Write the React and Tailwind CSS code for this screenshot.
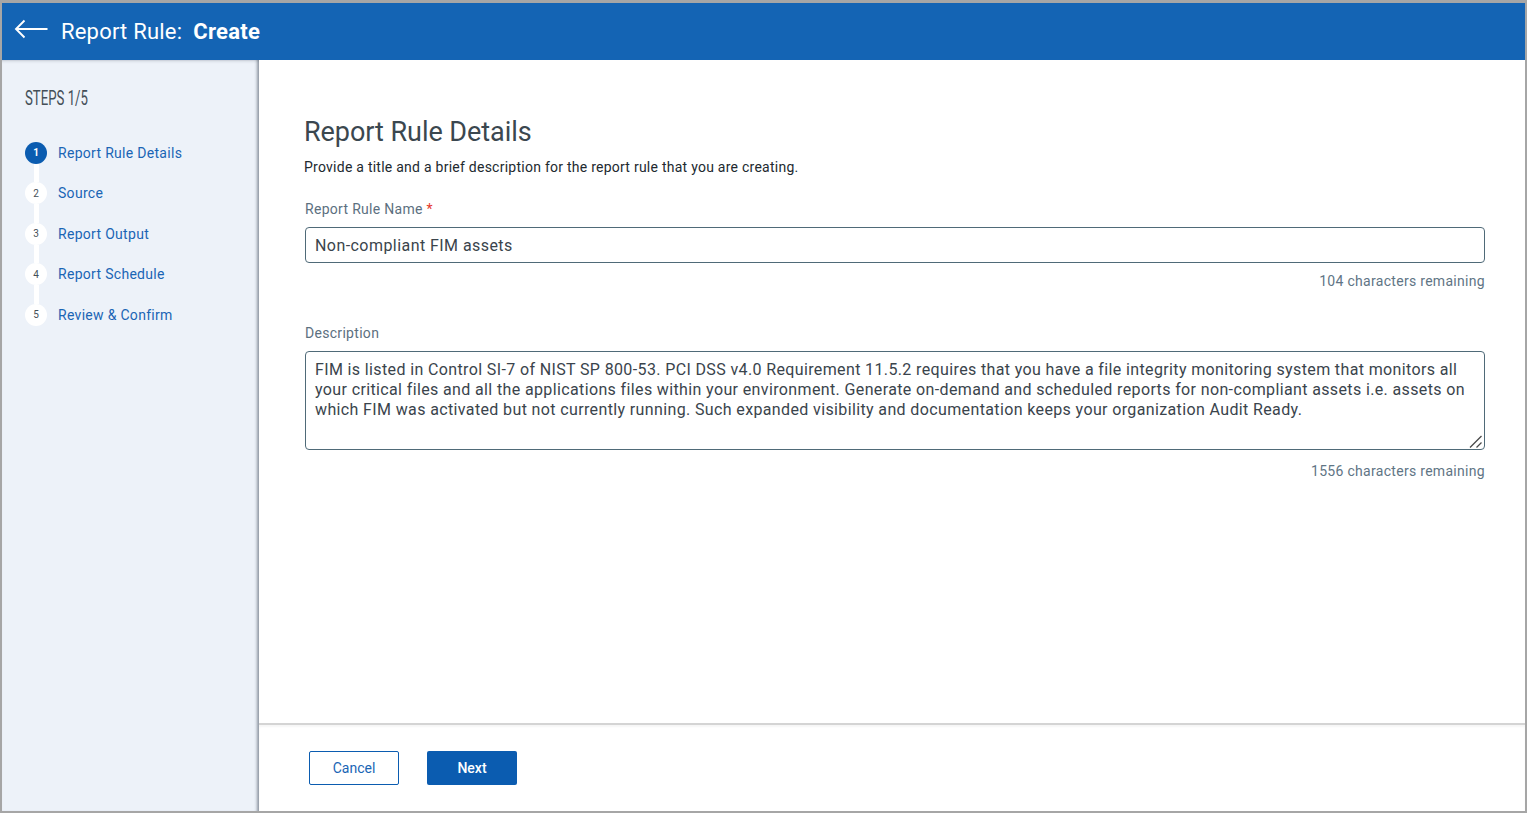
import { useState } from 'react';

const steps = ['Report Rule Details', 'Source', 'Report Output', 'Report Schedule', 'Review & Confirm'];

const descriptionText =
  'FIM is listed in Control SI-7 of NIST SP 800-53. PCI DSS v4.0 Requirement 11.5.2 requires that you have a file integrity monitoring system that monitors all your critical files and all the applications files within your environment. Generate on-demand and scheduled reports for non-compliant assets i.e. assets on which FIM was activated but not currently running. Such expanded visibility and documentation keeps your organization Audit Ready.';

function Step({ n, label, active, last }) {
  return (
    <div className="flex gap-[11px]">
      <div className="flex flex-col items-center w-[22px]">
        <div
          className={`w-[22px] h-[22px] rounded-full flex items-center justify-center text-[10px] ${
            active ? 'bg-[#0b5cb0] text-white font-bold' : 'bg-white text-[#444f58]'
          }`}
        >
          {n}
        </div>
        {!last && <div className="w-[5px] h-[18.5px] bg-white" />}
      </div>
      <div className="h-[22px] leading-[22px] text-[14px] tracking-[0.3px] text-[#1a65b5]">{label}</div>
    </div>
  );
}

export default function App() {
  const [name, setName] = useState('Non-compliant FIM assets');
  const [desc, setDesc] = useState(descriptionText);

  return (
    <div className="w-[1527px] h-[813px] overflow-hidden flex flex-col bg-white border-x-2 border-b-2 border-t-[3px] border-[#a6a6a6] font-['Roboto',sans-serif]">
      <header className="h-[57px] shrink-0 bg-[#1464b4] flex items-center text-white">
        <svg width="34" height="20" viewBox="0 0 34 20" fill="none" stroke="white" strokeWidth="1.9" className="ml-[12px] mb-[5px]">
          <path d="M33.5 10H2M10.5 1.5L2 10l8.5 8.5" />
        </svg>
        <span className="ml-[13px] text-[22px] tracking-[0.2px]">Report Rule:</span>
        <span className="ml-[11px] text-[22px] font-bold tracking-[0.3px]">Create</span>
      </header>

      <div className="flex-1 flex min-h-0">
        <aside className="w-[257px] shrink-0 bg-[#edf2f9] shadow-[inset_-4px_0_3px_-2px_rgba(70,80,95,0.55),inset_0_3px_3px_-2px_rgba(70,80,95,0.25)] pl-[23px] pt-[27px]">
          <div className="text-[20px] leading-[22px] text-[#444f58] whitespace-nowrap origin-left scale-x-[0.66]">STEPS 1/5</div>
          <div className="mt-[32.5px]">
            {steps.map((s, i) => (
              <Step key={s} n={i + 1} label={s} active={i === 0} last={i === steps.length - 1} />
            ))}
          </div>
        </aside>

        <main className="flex-1 flex flex-col min-w-0">
          <div className="flex-1 pl-[45px] pr-[40px] pt-[54px]">
            <h1 className="text-[27px] leading-[37px] text-[#3b474f] tracking-[-0.05px]">Report Rule Details</h1>
            <p className="mt-[6px] text-[14px] leading-[20px] tracking-[0.25px] text-[#22292f]">
              Provide a title and a brief description for the report rule that you are creating.
            </p>

            <label className="block ml-[1px] mt-[22px] text-[14px] leading-[20px] tracking-[0.3px] text-[#5c707f]">
              Report Rule Name <span className="text-[#e5372b]">*</span>
            </label>
            <input
              value={name}
              onChange={(e) => setName(e.target.value)}
              className="block ml-[1px] mt-[8px] w-[1180px] h-[36px] px-[9px] border border-[#4f6a78] rounded-[4px] text-[16px] tracking-[0.44px] text-[#3a444c] outline-none"
            />
            <div className="mt-[8px] text-right text-[14px] leading-[20px] tracking-[0.3px] text-[#5f7585]">104 characters remaining</div>

            <label className="block ml-[1px] mt-[32px] text-[14px] leading-[20px] tracking-[0.3px] text-[#5c707f]">Description</label>
            <div className="relative ml-[1px] mt-[8px] w-[1180px] h-[99px]">
              <textarea
                value={desc}
                onChange={(e) => setDesc(e.target.value)}
                className="block w-full h-full resize-none px-[9px] pt-[8px] border border-[#4f6a78] rounded-[4px] text-[16px] leading-[20px] tracking-[0.37px] text-[#3a444c] outline-none"
              />
              <svg width="13" height="13" viewBox="0 0 13 13" fill="none" stroke="#4a4a4a" strokeWidth="1.3" className="absolute right-[3px] bottom-[2px] pointer-events-none">
                <path d="M1 12.5L12.5 1M7.5 12.5l5-5" />
              </svg>
            </div>
            <div className="mt-[11px] text-right text-[14px] leading-[20px] tracking-[0.3px] text-[#5f7585]">1556 characters remaining</div>
          </div>

          <footer className="h-[88px] shrink-0 border-t-2 border-[#d4d4d4] shadow-[inset_0_2px_2px_rgba(0,0,0,0.04)] flex items-start gap-[28px] pl-[50px] pt-[26px]">
            <button className="w-[90px] h-[34px] border border-[#0b5cb0] rounded-[2px] bg-white text-[14px] text-[#1a65b5]">Cancel</button>
            <button className="w-[90px] h-[34px] rounded-[2px] bg-[#0b5cb0] text-[14px] font-medium text-white">Next</button>
          </footer>
        </main>
      </div>
    </div>
  );
}
